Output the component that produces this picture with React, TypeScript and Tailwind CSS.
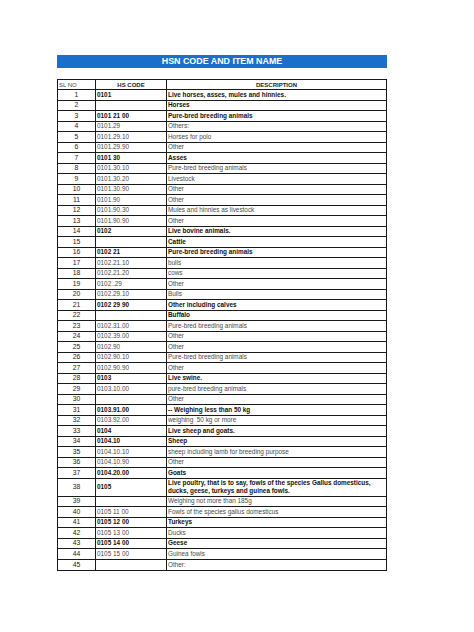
type Row = [string, string, string, boolean];

const rows: Row[] = [
  ["1", "0101", "Live horses, asses, mules and hinnies.", true],
  ["2", "", "Horses", true],
  ["3", "0101 21 00", "Pure-bred breeding animals", true],
  ["4", "0101.29", "Others:", false],
  ["5", "0101.29.10", "Horses for polo", false],
  ["6", "0101.29.90", "Other", false],
  ["7", "0101 30", "Asses", true],
  ["8", "0101.30.10", "Pure-bred breeding animals", false],
  ["9", "0101.30.20", "Livestock", false],
  ["10", "0101.30.90", "Other", false],
  ["11", "0101.90", "Other", false],
  ["12", "0101.90.30", "Mules and hinnies as livestock", false],
  ["13", "0101.90.90", "Other", false],
  ["14", "0102", "Live bovine animals.", true],
  ["15", "", "Cattle", true],
  ["16", "0102 21", "Pure-bred breeding animals", true],
  ["17", "0102.21.10", "bulls", false],
  ["18", "0102.21.20", "cows", false],
  ["19", "0102..29", "Other", false],
  ["20", "0102.29.10", "Bulls", false],
  ["21", "0102 29 90", "Other including calves", true],
  ["22", "", "Buffalo", true],
  ["23", "0102.31.00", "Pure-bred breeding animals", false],
  ["24", "0102.39.00", "Other", false],
  ["25", "0102.90", "Other", false],
  ["26", "0102.90.10", "Pure-bred breeding animals", false],
  ["27", "0102.90.90", "Other", false],
  ["28", "0103", "Live swine.", true],
  ["29", "0103.10.00", "pure-bred breeding animals", false],
  ["30", "", "Other", false],
  ["31", "0103.91.00", "-- Weighing less than 50 kg", true],
  ["32", "0103.92.00", "weighing  50 kg or more", false],
  ["33", "0104", "Live sheep and goats.", true],
  ["34", "0104.10", "Sheep", true],
  ["35", "0104.10.10", "sheep including lamb for breeding purpose", false],
  ["36", "0104.10.90", "Other", false],
  ["37", "0104.20.00", "Goats", true],
  ["38", "0105", "Live poultry, that is to say, fowls of the species Gallus domesticus,\nducks, geese, turkeys and guinea fowls.", true],
  ["39", "", "Weighing not more than 185g", false],
  ["40", "0105 11 00", "Fowls of the species gallus domesticus", false],
  ["41", "0105 12 00", "Turkeys", true],
  ["42", "0105 13 00", "Ducks", false],
  ["43", "0105 14 00", "Geese", true],
  ["44", "0105 15 00", "Guinea fowls", false],
  ["45", "", "Other:", false],
];

export default function App() {
  return (
    <div className="min-h-[632px] w-[474px] bg-white pl-[57px] pt-[55px] font-['Liberation_Sans',Arial,sans-serif]">
      <div className="w-[330px]">
        {/* Title bar */}
        <div className="flex h-[13px] items-center justify-center bg-[#1b6fca] text-[8.9px] font-bold leading-none text-white">
          HSN CODE AND ITEM NAME
        </div>

        {/* Table */}
        <div className="mt-[11px] w-[330px] border-[1.5px] border-[#1a1a1a]">
          <div className="grid h-[10.4px] grid-cols-[38px_71px_1fr] border-b border-[#1a1a1a] text-[6px] leading-none">
            <div className="flex items-center border-r-[1.5px] border-[#1a1a1a] pl-px text-[#444]">SL NO</div>
            <div className="flex items-center justify-center border-r-[1.5px] border-[#1a1a1a] font-bold text-[#222]">HS CODE</div>
            <div className="flex items-center justify-center font-bold text-[#222]">DESCRIPTION</div>
          </div>
          {rows.map(([sl, code, desc, bold], i) => (
            <div
              key={sl}
              className={`grid grid-cols-[38px_71px_1fr] leading-none ${
                sl === "38" ? "h-[18px]" : "h-[10.5px]"
              } ${i < rows.length - 1 ? "border-b border-[#1a1a1a]" : ""}`}
            >
              <div className="flex items-center justify-center border-r-[1.5px] border-[#1a1a1a] text-[6.8px] text-[#222]">
                {sl}
              </div>
              <div
                className={`flex items-center border-r-[1.5px] border-[#1a1a1a] pl-[1px] text-[6.4px] ${
                  bold ? "font-bold text-[#111]" : "text-[#4a4a4a]"
                }`}
              >
                {code}
              </div>
              <div
                className={`flex items-center pl-[1px] text-[6.4px] ${
                  bold ? "font-bold text-[#111]" : "text-[#4a4a4a]"
                } ${sl === "38" ? "leading-[1.25]" : ""}`}
              >
                <span className="whitespace-pre-wrap">{desc}</span>
              </div>
            </div>
          ))}
        </div>
      </div>
    </div>
  );
}
